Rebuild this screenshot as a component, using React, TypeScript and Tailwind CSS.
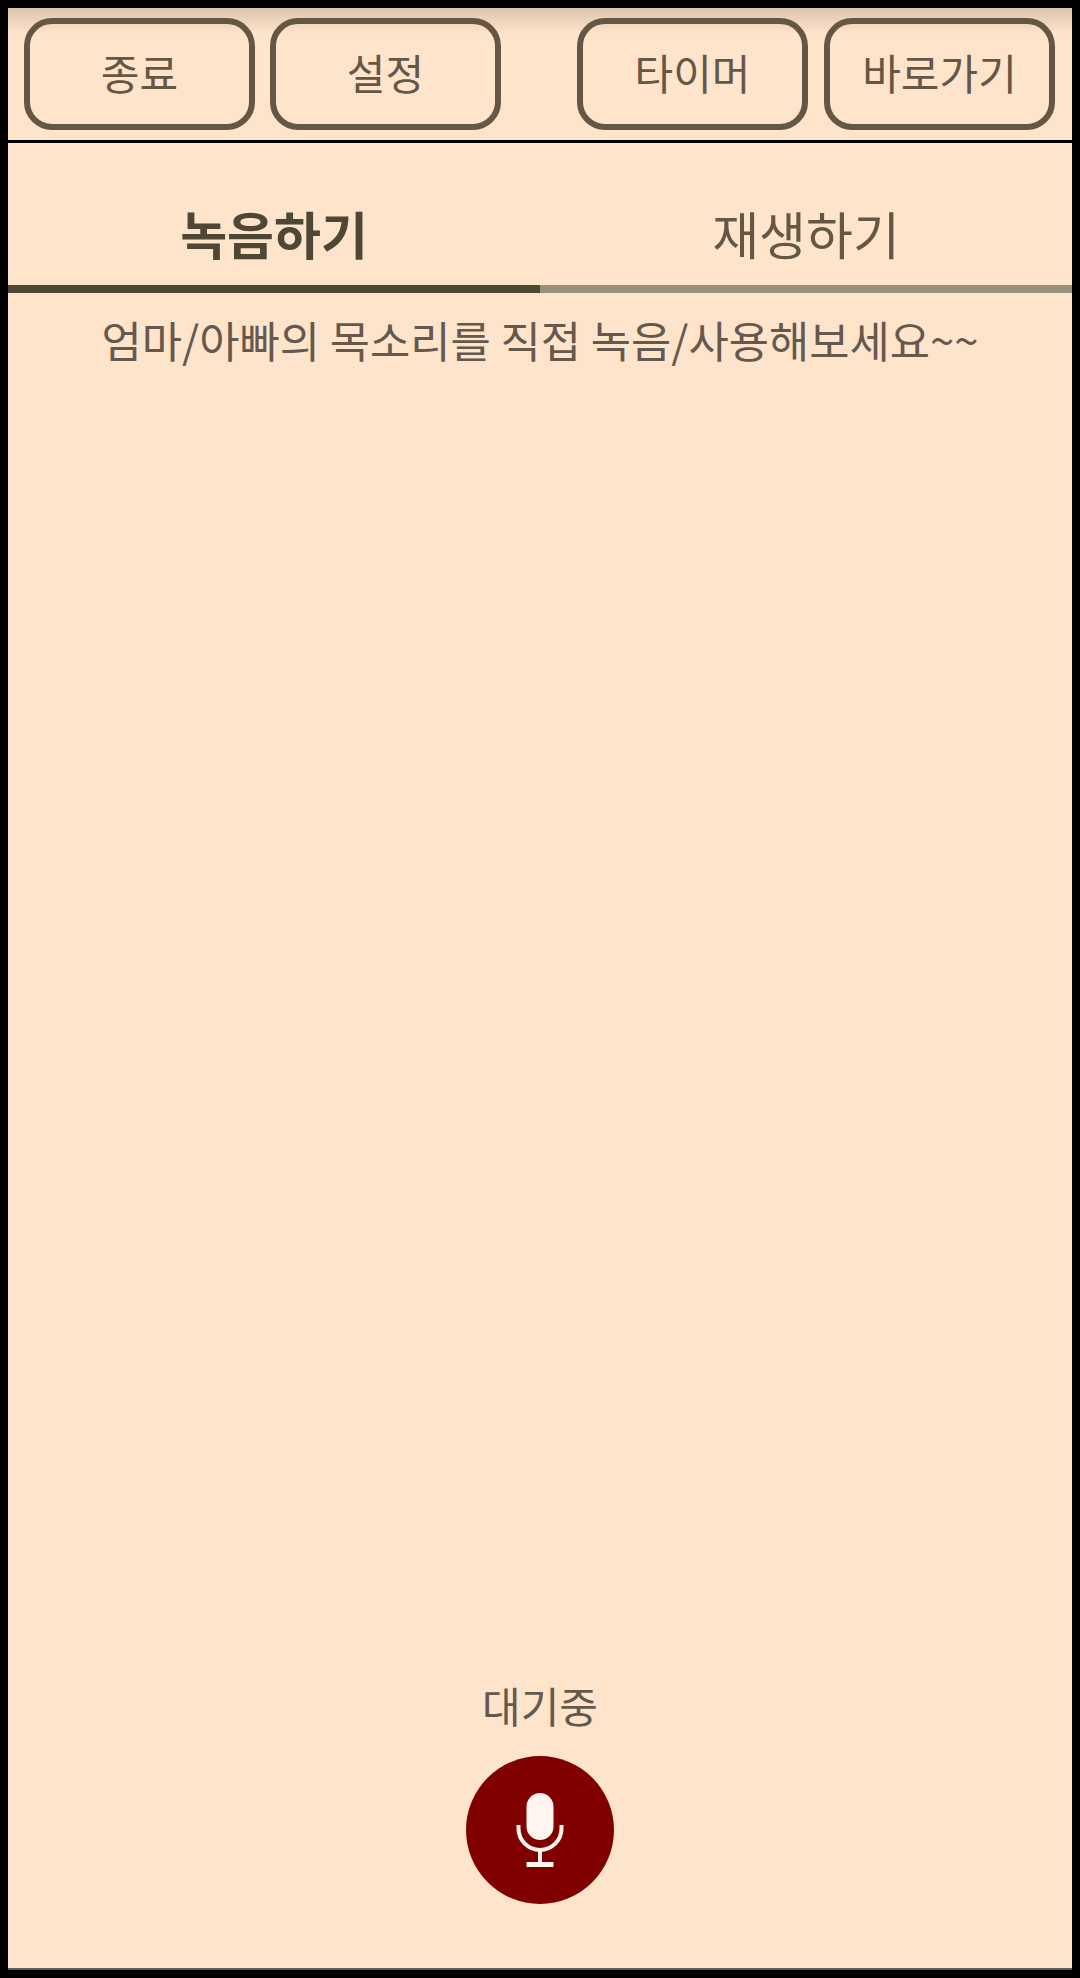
const FONT = "font-['Noto_Sans_CJK_KR','Noto_Sans',sans-serif]";

function TopButton({ label }: { label: string }) {
  return (
    <button className="w-[231px] h-[112px] flex items-center justify-center pb-[4px] rounded-[28px] border-[6.5px] border-[#655745] text-[42px] leading-none text-[#655745]">
      {label}
    </button>
  );
}

function MicIcon() {
  return (
    <svg width="60" height="74" viewBox="0 0 60 74" fill="none">
      <rect x="16.5" y="0" width="27" height="47" rx="13.5" fill="#fff5ee" />
      <path d="M8.5 32v3.5a21.5 21.5 0 0 0 43 0v-3.5" stroke="#fff5ee" strokeWidth="4" />
      <path d="M30 57v13" stroke="#fff5ee" strokeWidth="4" />
      <rect x="16.5" y="69" width="27" height="5" fill="#fff5ee" />
    </svg>
  );
}

export default function App() {
  return (
    <div className={`${FONT} w-[1080px] h-[1978px] bg-black pt-2 pb-2 px-2`}>
      <div className="flex flex-col h-full bg-[#ffe4cc] border-b-2 border-[#5f5f58]">
        <header className="flex items-center h-[135px] shrink-0 pl-4 pr-[17px] border-b-[3px] border-black bg-[linear-gradient(to_bottom,#dcc5af,#ffe4cc_26px)]">
          <div className="flex gap-[15px]">
            <TopButton label="종료" />
            <TopButton label="설정" />
          </div>
          <div className="flex gap-4 ml-auto">
            <TopButton label="타이머" />
            <TopButton label="바로가기" />
          </div>
        </header>

        <div className="flex shrink-0 h-[150px]">
          <div className="flex-1 flex items-center justify-center pt-[38px] border-b-[8px] border-[#4f4736] text-[51px] font-bold text-[#4f4736]">
            녹음하기
          </div>
          <div className="flex-1 flex items-center justify-center pt-[38px] border-b-[8px] border-[#9a917a] text-[51px] text-[#655745]">
            재생하기
          </div>
        </div>

        <p className="mt-[16px] text-center text-[43.75px] leading-[60px] text-[#64594c]">
          엄마/아빠의 목소리를 직접 녹음/사용해보세요~~
        </p>

        <div className="flex-1" />

        <div className="flex flex-col items-center pb-[64px]">
          <span className="text-[42px] leading-[60px] text-[#64594c]">대기중</span>
          <button className="mt-[21px] w-[148px] h-[148px] rounded-full bg-[#800000] flex items-center justify-center">
            <MicIcon />
          </button>
        </div>
      </div>
    </div>
  );
}
